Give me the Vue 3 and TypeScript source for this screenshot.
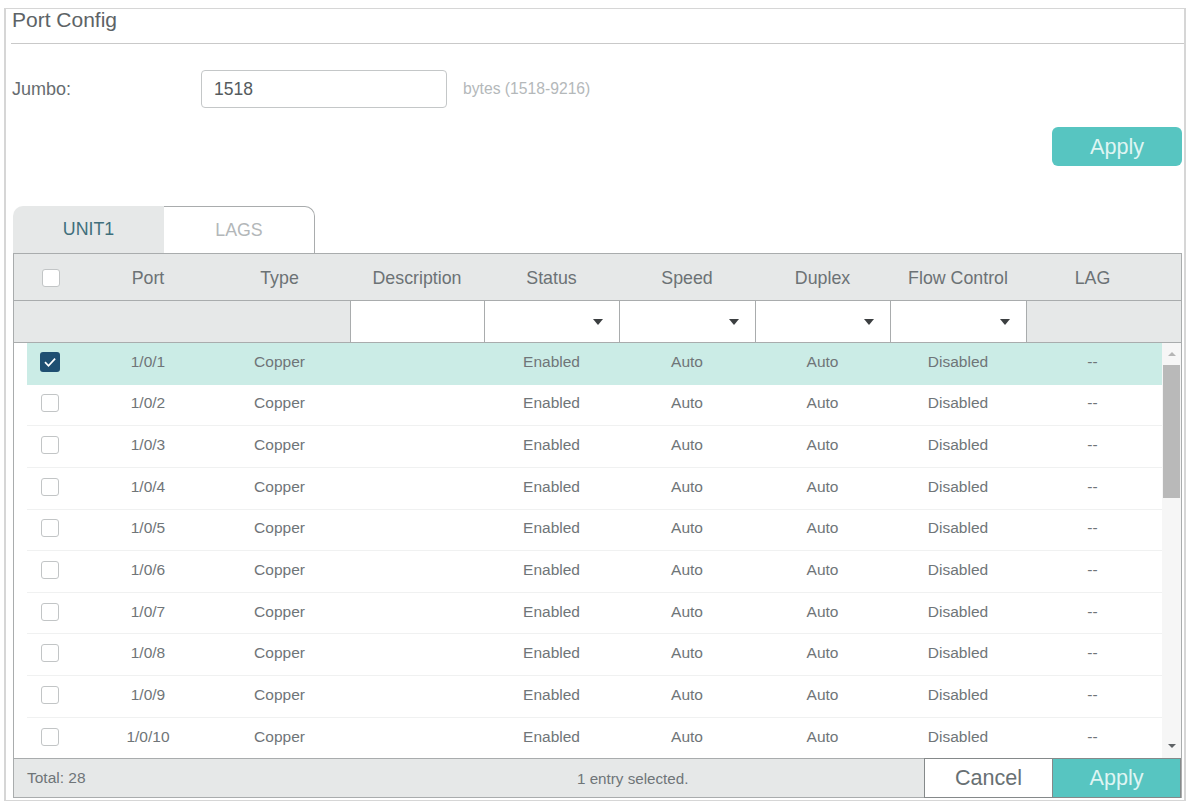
<template>
  <div class="page">
    <section class="panel">
      <h2 class="title">Port Config</h2>
      <div class="field">
        <label class="field-label" for="jumbo">Jumbo:</label>
        <input id="jumbo" class="field-input" type="text" value="1518" />
        <span class="field-hint">bytes (1518-9216)</span>
      </div>
      <div class="apply-row">
        <button type="button" class="apply-top">Apply</button>
      </div>
      <div class="tabs">
        <button type="button" class="tab active">UNIT1</button>
        <button type="button" class="tab">LAGS</button>
      </div>
      <div class="grid">
        <div class="head cols">
          <span class="cell-check"><span class="check" /></span>
          <span v-for="h in headers" :key="h">{{ h }}</span>
        </div>
        <div class="filter cols">
          <span class="filter-blank" />
          <span class="filter-box" />
          <span v-for="n in 4" :key="n" class="filter-box select"><i class="caret" /></span>
          <span class="filter-blank" />
        </div>
        <div class="body">
          <div class="rows">
            <div v-for="(p, i) in ports" :key="p" class="row cols" :class="{ selected: i === 0 }">
              <span class="cell-check">
                <span class="check" :class="{ on: i === 0 }">
                  <svg v-if="i === 0" viewBox="0 0 20 20" width="20" height="20">
                    <path d="M5 10.2l3.5 3.6 6.6-7.2" fill="none" stroke="#fff" stroke-width="1.7" />
                  </svg>
                </span>
              </span>
              <span>{{ p }}</span>
              <span>Copper</span>
              <span />
              <span>Enabled</span>
              <span>Auto</span>
              <span>Auto</span>
              <span>Disabled</span>
              <span>--</span>
            </div>
          </div>
          <div class="scroll">
            <i class="arrow up" />
            <div class="track"><div class="thumb" /></div>
            <i class="arrow down" />
          </div>
        </div>
        <div class="foot">
          <span class="total">Total: 28</span>
          <span class="selected-count">1 entry selected.</span>
          <button type="button" class="cancel">Cancel</button>
          <button type="button" class="apply">Apply</button>
        </div>
      </div>
    </section>
  </div>
</template>

<script setup lang="ts">
const headers: string[] = ['Port', 'Type', 'Description', 'Status', 'Speed', 'Duplex', 'Flow Control', 'LAG'];
const ports: string[] = Array.from({ length: 10 }, (_, i) => `1/0/${i + 1}`);
</script>

<style>
html, body { margin: 0; background: #fff; }
</style>

<style scoped>
.page {
  width: 1190px;
  height: 801px;
  padding: 8px 4px 0;
  box-sizing: border-box;
  overflow: hidden;
  font-family: "Liberation Sans", Arial, sans-serif;
  color: #6f7578;
}
.panel {
  height: 793px;
  box-sizing: border-box;
  border: 1px solid #d6d6d6;
  border-left-width: 2px;
  border-right-width: 2px;
  padding: 0 2px 0 7px;
}
.title {
  margin: 0 -2px 0 -2px;
  height: 34px;
  padding-left: 1px;
  border-bottom: 1px solid #c9c9c9;
  font-size: 21px;
  font-weight: 400;
  line-height: 21px;
  color: #5d6366;
}
.field {
  display: flex;
  align-items: center;
  margin-top: 26px;
  height: 38px;
}
.field-label {
  width: 189px;
  margin-left: -1px;
  font-size: 18px;
  color: #666c6f;
}
.field-input {
  width: 246px;
  height: 38px;
  box-sizing: border-box;
  border: 1px solid #c4c7c8;
  border-radius: 4px;
  padding: 0 12px;
  font: 17.5px "Liberation Sans", Arial, sans-serif;
  color: #555b5e;
  outline: none;
}
.field-hint {
  margin-left: 16px;
  font-size: 15.7px;
  color: #b4b8ba;
}
.apply-row {
  display: flex;
  justify-content: flex-end;
  margin-top: 19px;
}
.apply-top {
  width: 130px;
  height: 39px;
  border: 0;
  border-radius: 6px;
  background: #57c5c1;
  color: #dff5f3;
  font: 21.6px "Liberation Sans", Arial, sans-serif;
  padding: 0;
}
.tabs {
  display: flex;
  margin-top: 40px;
  height: 47px;
}
.tab {
  width: 151px;
  padding: 0;
  font: 17.8px "Liberation Sans", Arial, sans-serif;
  background: #fff;
  color: #b3b7b9;
  border: 1px solid #a9acad;
  border-bottom: 0;
  border-left: 0;
  border-radius: 0 10px 0 0;
}
.tab.active {
  background: #e6e8e8;
  color: #3f6f7c;
  border: 0;
  border-radius: 10px 0 0 0;
}
.grid {
  height: 545px;
  box-sizing: border-box;
  border: 1px solid #a9acad;
  border-top: 0;
  display: flex;
  flex-direction: column;
}
.cols {
  display: grid;
  grid-template-columns: 73px 122px 141px 134px 135px 136px 135px 136px 133px;
  align-items: center;
  text-align: center;
}
.head {
  height: 48px;
  flex: none;
  box-sizing: border-box;
  padding-top: 2px;
  background: #e6e8e8;
  border-top: 1px solid #a9acad;
  border-bottom: 1px solid #a9acad;
  font-size: 17.8px;
  color: #6c7275;
}
.head .cell-check {
  grid-column: 1;
}
.filter {
  height: 42px;
  flex: none;
  box-sizing: border-box;
  background: #e6e8e8;
  border-bottom: 1px solid #a9acad;
  align-items: stretch;
  grid-template-columns: 336px 134px 135px 136px 135px 136px 136px;
}
.filter-box {
  background: #fff;
  border-left: 1px solid #a9acad;
  display: flex;
  align-items: center;
  justify-content: flex-end;
  padding-right: 16px;
}
.filter-blank:last-child {
  border-left: 1px solid #a9acad;
}
.caret {
  width: 0;
  height: 0;
  border-left: 5px solid transparent;
  border-right: 5px solid transparent;
  border-top: 6px solid #3c3f41;
}
.body {
  flex: 1;
  min-height: 0;
  display: flex;
  overflow: hidden;
}
.rows {
  flex: 1;
  min-width: 0;
}
.row {
  height: 41.65px;
  box-sizing: border-box;
  padding-bottom: 3px;
  border-bottom: 1px solid #f0f1f1;
  font-size: 15.5px;
  color: #6f7578;
  margin-left: 13px;
  margin-right: -1px;
  grid-template-columns: 60px 122px 141px 134px 135px 136px 135px 136px 133px;
}
.row:last-child {
  border-bottom: 0;
}
.row.selected {
  background: #cbece6;
  border-bottom: 0;
}
.cell-check {
  display: flex;
  justify-content: center;
}
.row .cell-check {
  padding-right: 14px;
}
.check {
  width: 18px;
  height: 18px;
  box-sizing: border-box;
  display: block;
  border: 1px solid #c2c5c6;
  border-radius: 3px;
  background: #fff;
}
.check.on {
  width: 20px;
  height: 20px;
  border: 0;
  background: #1f4f72;
}
.check svg {
  display: block;
}
.scroll {
  width: 19px;
  flex: none;
  background: #f6f6f6;
  display: flex;
  flex-direction: column;
  align-items: center;
}
.track {
  flex: 1;
  width: 100%;
  padding: 0 1px;
  box-sizing: border-box;
}
.thumb {
  height: 133px;
  background: #b9b9b9;
}
.arrow {
  width: 0;
  height: 0;
  flex: none;
  border-left: 4px solid transparent;
  border-right: 4px solid transparent;
}
.arrow.up {
  margin: 9px 0 9px;
  border-bottom: 4px solid #b5b5b5;
}
.arrow.down {
  margin: 8px 0 10px;
  border-top: 4px solid #5f6366;
}
.foot {
  height: 39px;
  flex: none;
  box-sizing: border-box;
  background: #e6e8e8;
  border-top: 1px solid #a9acad;
  display: flex;
  align-items: center;
  font-size: 15.5px;
  color: #6f7578;
}
.total {
  width: 563px;
  padding-left: 13px;
  box-sizing: border-box;
}
.selected-count {
  width: 347px;
  font-size: 15.2px;
}
.cancel,
.apply {
  width: 129px;
  height: 40px;
  box-sizing: border-box;
  padding: 0;
  font: 21.6px "Liberation Sans", Arial, sans-serif;
}
.cancel {
  background: #fff;
  border: 1px solid #85898a;
  color: #687073;
}
.apply {
  flex: 1;
  border: 1px solid #85898a;
  border-left: 0;
  background: #57c5c1;
  color: #dff5f3;
}
</style>
